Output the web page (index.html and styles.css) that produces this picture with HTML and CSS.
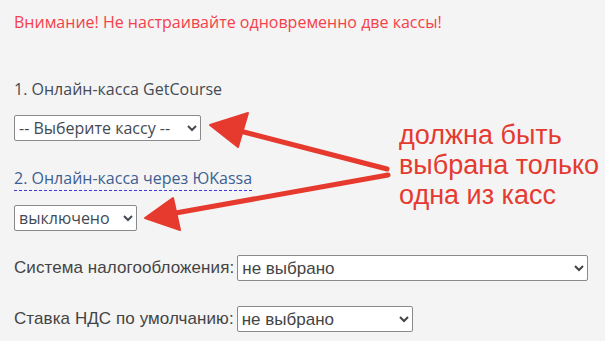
FILE: index.html
```html
<!DOCTYPE html>
<html lang="ru">
<head>
    <meta charset="utf-8">
    <title>Онлайн-касса</title>
    <link rel="stylesheet" href="styles.css">
</head>
<body>

<div class="page">
    <p class="warning">Внимание! Не настраивайте одновременно две кассы!</p>

    <div class="block">
        <label class="title" for="kassa1">1. Онлайн-касса GetCourse</label>
        <select id="kassa1" class="kassa-select first">
            <option>-- Выберите кассу --</option>
        </select>
    </div>

    <div class="block">
        <label class="title link" for="kassa2">2. Онлайн-касса через ЮKassa</label>
        <select id="kassa2" class="kassa-select second">
            <option>выключено</option>
        </select>
    </div>

    <div class="row">
        <label for="tax">Система налогообложения:</label>
        <select id="tax" class="plain-select wide">
            <option>не выбрано</option>
        </select>
    </div>

    <div class="row">
        <label for="vat">Ставка НДС по умолчанию:</label>
        <select id="vat" class="plain-select narrow">
            <option>не выбрано</option>
        </select>
    </div>

    <div class="note">должна быть<br>выбрана только<br>одна из касс</div>

    <!-- annotation arrows drawn over the form -->
    <svg class="arrows" width="605" height="341" viewBox="0 0 605 341">
        <g fill="#e63a2e" stroke="#e63a2e" stroke-linecap="round" stroke-linejoin="round">
            <line x1="387" y1="169" x2="236" y2="130" stroke-width="5"/>
            <polygon points="210,125 248,113 238,147" stroke-width="2"/>
            <line x1="388" y1="175" x2="170" y2="214" stroke-width="5"/>
            <polygon points="145,218 173,198 180,230" stroke-width="2"/>
        </g>
    </svg>
</div>

</body>
</html>
```

FILE: styles.css
```css
body {
  margin: 0;
  background-color: #f4f4f4;
}
.page {
  position: relative;
  height: 341px;
  padding: 0 14px;
  overflow: hidden;
  font-family: "Open Sans", Lato, sans-serif;
  color: #434a54;
}
.warning {
  margin: 0;
  padding-top: 13px;
  font-size: 16px;
  line-height: 18px;
  color: #f5404a;
}
.block {
  display: flex;
  flex-direction: column;
  align-items: flex-start;
}
.title {
  font-size: 16px;
  line-height: 18px;
  margin-top: 49px;
}
.link {
  margin-top: 28px;
  color: #3d5f93;
  border-bottom: 1px dashed #3b3bd6;
  padding-bottom: 3px;
}
.kassa-select {
  margin-top: 17px;
  height: 26px;
  font-family: "Open Sans", Lato, sans-serif;
  font-size: 16px;
  color: #434a54;
  background-color: #fff;
  border: 1px solid #8a8a8a;
  border-radius: 2px;
}
.first {
  width: 187px;
}
.second {
  margin-top: 14px;
  width: 123px;
}
.row {
  display: flex;
  align-items: center;
  gap: 3px;
  margin-top: 24px;
  font-family: "Liberation Sans", Arial, sans-serif;
  font-size: 17px;
  letter-spacing: 0.08px;
  color: #444;
}
.row + .row {
  margin-top: 25px;
}
.plain-select {
  height: 26px;
  font-family: "Liberation Sans", Arial, sans-serif;
  font-size: 17px;
  color: #444;
  background-color: #fff;
  border: 1px solid #8a8a8a;
  border-radius: 2px;
}
.wide {
  width: 351px;
}
.narrow {
  width: 176px;
}
.note {
  position: absolute;
  left: 399px;
  top: 120px;
  font-family: "Liberation Sans", Arial, sans-serif;
  font-size: 27px;
  line-height: 30px;
  color: #e53a30;
  white-space: nowrap;
}
.arrows {
  position: absolute;
  left: 0;
  top: 0;
}
```
